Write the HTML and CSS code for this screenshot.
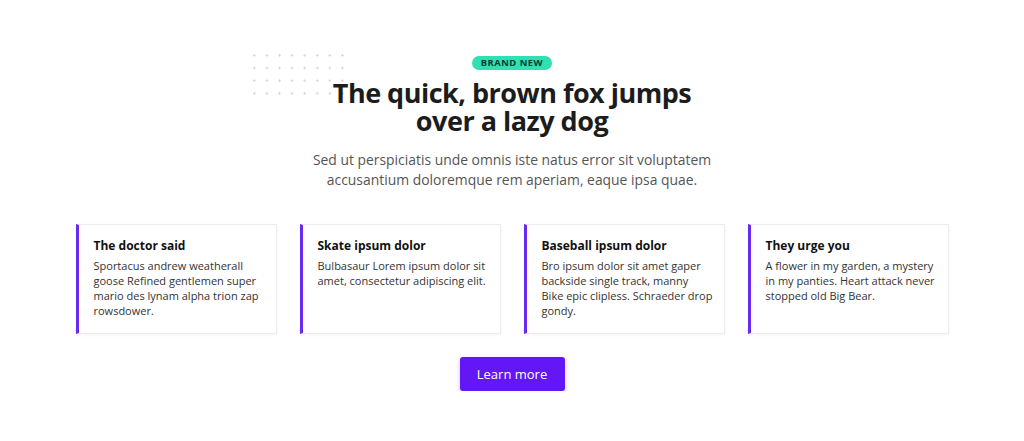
FILE: index.html
```html
<!DOCTYPE html>
<html>
<head>
<meta charset="utf-8">
<link rel="stylesheet" href="styles.css">
</head>
<body>
<section class="feature">
  <div class="hero">
    <div class="dots"></div>
    <span class="badge">BRAND NEW</span>
    <h1 class="title">The quick, brown fox jumps<br>over a lazy dog</h1>
    <p class="lead">Sed ut perspiciatis unde omnis iste natus error sit voluptatem<br>accusantium doloremque rem aperiam, eaque ipsa quae.</p>
  </div>
  <div class="cards">
    <div class="card">
      <h3 class="card-title">The doctor said</h3>
      <p class="card-text">Sportacus andrew weatherall goose Refined gentlemen super mario des lynam alpha trion zap rowsdower.</p>
    </div>
    <div class="card">
      <h3 class="card-title">Skate ipsum dolor</h3>
      <p class="card-text">Bulbasaur Lorem ipsum dolor sit amet, consectetur adipiscing elit.</p>
    </div>
    <div class="card">
      <h3 class="card-title">Baseball ipsum dolor</h3>
      <p class="card-text">Bro ipsum dolor sit amet gaper backside single track, manny<br>Bike epic clipless. Schraeder drop gondy.</p>
    </div>
    <div class="card">
      <h3 class="card-title">They urge you</h3>
      <p class="card-text">A flower in my garden, a mystery in my panties. Heart attack never stopped old Big Bear.</p>
    </div>
  </div>
  <div class="actions">
    <a class="btn" href="#">Learn more</a>
  </div>
</section>
</body>
</html>
```
FILE: styles.css
```css
* { box-sizing: border-box; }
html, body { margin: 0; padding: 0; background: #fff; }
body {
  font-family: "Open Sans", "Noto Sans", sans-serif;
  color: #1f1f1f;
}
.feature {
  padding-top: 56px;
  display: flex;
  flex-direction: column;
  align-items: center;
}
.hero {
  position: relative;
  display: flex;
  flex-direction: column;
  align-items: center;
  width: 100%;
}
.dots {
  position: absolute;
  top: -7px;
  left: calc(50% - 264px);
  width: 101px;
  height: 51px;
  background-image: radial-gradient(circle, #d3d3d8 0.9px, transparent 1.3px);
  background-size: 12.6px 12.7px;
  z-index: 0;
}
.badge {
  position: relative;
  z-index: 1;
  display: inline-block;
  height: 14px;
  line-height: 14px;
  padding: 0 9px;
  border-radius: 7px;
  background: #2fe0b2;
  color: #0e3a30;
  font-size: 9.4px;
  font-weight: 700;
  letter-spacing: 0.5px;
}
.title {
  position: relative;
  z-index: 1;
  margin: 9px 0 0;
  font-size: 27px;
  line-height: 28px;
  font-weight: 700;
  letter-spacing: -0.5px;
  text-align: center;
  color: #1c1c1c;
}
.lead {
  margin: 15px 0 0;
  font-size: 13.9px;
  line-height: 20px;
  color: #555;
  text-align: center;
}
.cards {
  margin-top: 34px;
  display: grid;
  grid-template-columns: repeat(4, 201px);
  column-gap: 23px;
}
.card {
  height: 110px;
  border: 1px solid #ececec;
  border-left: 3px solid #6a2bf0;
  box-shadow: 0 1px 3px rgba(0,0,0,0.05);
  padding: 13px 6px 0 15px;
  background: #fff;
}
.card-title {
  margin: 0;
  font-size: 12px;
  line-height: 16px;
  font-weight: 700;
  color: #111;
}
.card-text {
  margin: 4px 0 0;
  font-size: 11px;
  line-height: 15px;
  color: #333;
}
.actions {
  margin-top: 23px;
  display: flex;
  justify-content: center;
}
.btn {
  display: inline-flex;
  align-items: center;
  justify-content: center;
  width: 105px;
  height: 34px;
  border-radius: 3px;
  background: #6317f5;
  color: #fff;
  font-size: 13px;
  font-weight: 500;
  text-decoration: none;
  box-shadow: 0 2px 5px rgba(99,23,245,0.25);
}
```
